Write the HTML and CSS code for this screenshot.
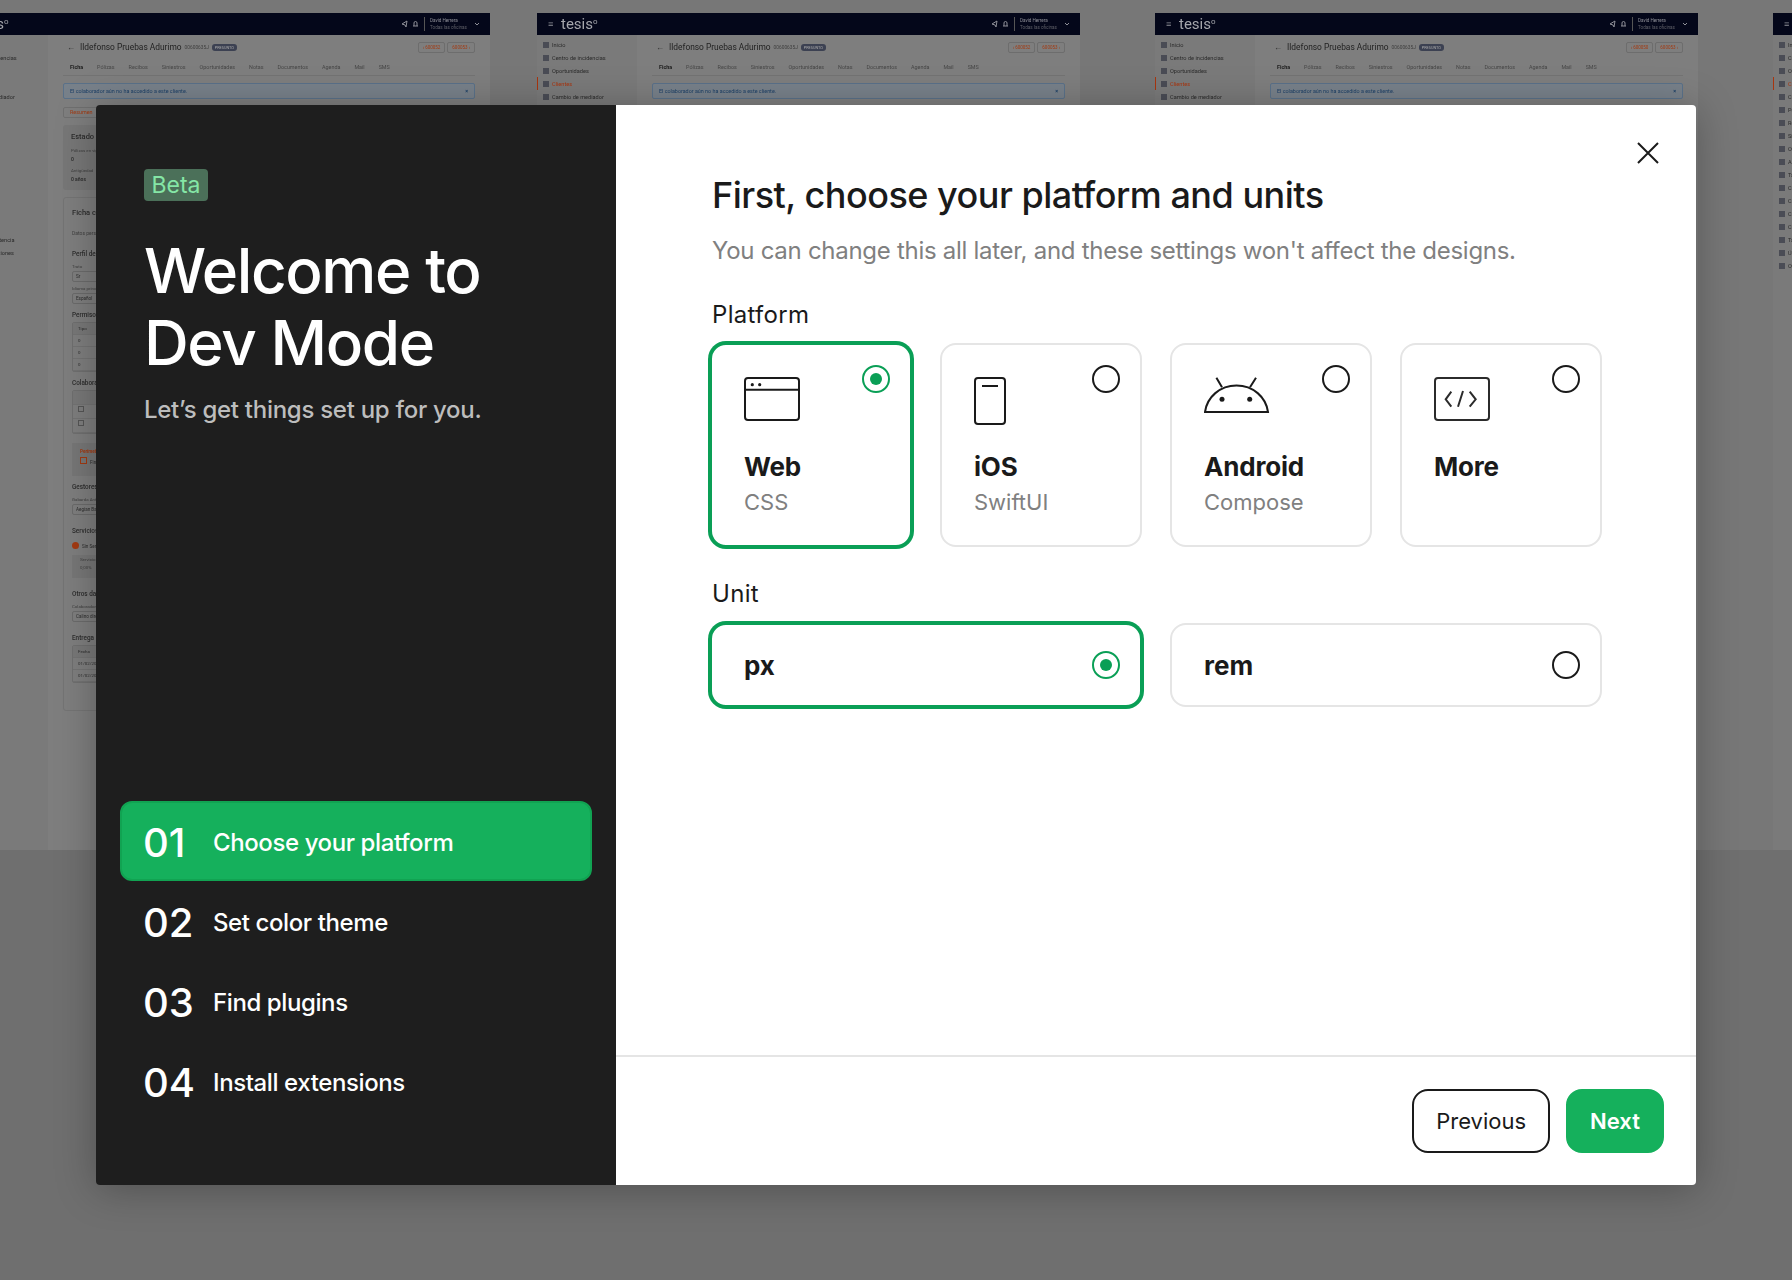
FILE: index.html
```html
<!DOCTYPE html>
<html lang="en">
<head>
	<meta charset="UTF-8">
	<meta name="viewport" content="width=device-width, initial-scale=1.0">
	<title>Welcome to Dev Mode</title>
	<link rel="stylesheet" href="styles.css">
</head>
<body>
	<div class="board">
		<!-- window 1, only the left edge shows next to the modal -->
		<div class="screen screen-1">
			<div class="topbar">
				<span class="menu-icon">≡</span><span class="logo">tesis<sup>o</sup></span>
				<svg class="bar-icons" width="18" height="8" viewBox="0 0 18 8" fill="none" stroke="#8f9098"><path d="M1 4l5-3-1 6-1-2zM12 6h5M13 6V3a1.500 1.500 0 013 0v3"/></svg>
				<div class="user"><span class="user-name">David Herrera</span><span class="user-sub">Todas las oficinas</span></div>
				<svg class="chevron" width="6" height="4" viewBox="0 0 6 4" fill="none" stroke="#8f9098"><path d="M1 1l2 2 2-2"/></svg>
			</div>
			<div class="screen-body">
				<ul class="side">
					<li><i></i>Inicio</li>
					<li><i></i>Centro de incidencias</li>
					<li><i></i>Oportunidades</li>
					<li class="side-current"><i></i>Clientes</li>
					<li><i></i>Cambio de mediador</li>
					<li><i></i>Pólizas</li>
					<li><i></i>Recibos</li>
					<li><i></i>Siniestros</li>
					<li><i></i>Otros</li>
					<li><i></i>Agenda</li>
					<li><i></i>Tareas</li>
					<li><i></i>Cartera</li>
					<li><i></i>Cuentas</li>
					<li><i></i>Cobros</li>
					<li><i></i>Correo</li>
					<li><i></i>Tarifas de asistencia</li>
					<li><i></i>Últimas operaciones</li>
					<li><i></i>Otros</li>
				</ul>
				<div class="content">
					<div class="crumb"><span class="back">←</span><span class="client">Ildefonso Pruebas Adurimo</span><span class="client-id">00600635J</span><span class="pill">PRESUNTO</span>
						<div class="pager"><span>‹ 600052</span><span>600053 ›</span></div>
					</div>
					<div class="tabs"><span class="tab-on">Ficha</span><span>Pólizas</span><span>Recibos</span><span>Siniestros</span><span>Oportunidades</span><span>Notas</span><span>Documentos</span><span>Agenda</span><span>Mail</span><span>SMS</span></div>
					<div class="notice">El colaborador aún no ha accedido a este cliente.<b>×</b></div>
					<div class="subtab">Resumen</div>
					<div class="block">
						<h4>Estado actual</h4>
						<p class="tiny">Pólizas en vigor</p><p class="val">0</p>
						<p class="tiny">Antigüedad</p><p class="val">0 años</p>
					</div>
					<div class="sheet">
						<h4>Ficha cliente</h4>
						<p class="tiny data">Datos personales</p>
						<h5 class="after-data">Perfil del cliente</h5>
						<p class="tiny">Trato</p><div class="field">Sr</div>
						<p class="tiny">Idioma principal</p><div class="field">Español</div>
						<h5>Permisos</h5>
						<div class="grid-box"><p>Tipo</p><p>0</p><p>0</p><p>0</p></div>
						<h5>Colaboradores</h5>
						<div class="grid-box grid-icons"><p>&nbsp;</p><p><i></i></p><p><i></i></p></div>
						<div class="perm"><p class="perm-title">Perímetro</p><p><i></i>Firma</p></div>
						<h5>Gestores</h5>
						<p class="tiny">Gabarda Antonio</p><div class="field">Aegian Baltic</div>
						<h5 class="wide-gap">Servicios</h5>
						<p class="radio-line"><i></i>Sin Servicio</p>
						<div class="perm perm-small"><p class="tiny">Servicio</p><p class="tiny">0,00%</p></div>
						<h5 class="wide-gap">Otros datos</h5>
						<p class="tiny">Colaborador</p><div class="field">Calino dirección</div>
						<h5 class="wide-gap">Entrega</h5>
						<div class="grid-box"><p>Fecha</p><p>01/02/2023</p><p>01/02/2023</p></div>
					</div>
				</div>
			</div>
		</div>

		<div class="screen screen-2">
			<div class="topbar">
				<span class="menu-icon">≡</span><span class="logo">tesis<sup>o</sup></span>
				<svg class="bar-icons" width="18" height="8" viewBox="0 0 18 8" fill="none" stroke="#8f9098"><path d="M1 4l5-3-1 6-1-2zM12 6h5M13 6V3a1.500 1.500 0 013 0v3"/></svg>
				<div class="user"><span class="user-name">David Herrera</span><span class="user-sub">Todas las oficinas</span></div>
				<svg class="chevron" width="6" height="4" viewBox="0 0 6 4" fill="none" stroke="#8f9098"><path d="M1 1l2 2 2-2"/></svg>
			</div>
			<div class="screen-body">
				<ul class="side">
					<li><i></i>Inicio</li>
					<li><i></i>Centro de incidencias</li>
					<li><i></i>Oportunidades</li>
					<li class="side-current"><i></i>Clientes</li>
					<li><i></i>Cambio de mediador</li>
				</ul>
				<div class="content">
					<div class="crumb"><span class="back">←</span><span class="client">Ildefonso Pruebas Adurimo</span><span class="client-id">00600635J</span><span class="pill">PRESUNTO</span>
						<div class="pager"><span>‹ 600052</span><span>600053 ›</span></div>
					</div>
					<div class="tabs"><span class="tab-on">Ficha</span><span>Pólizas</span><span>Recibos</span><span>Siniestros</span><span>Oportunidades</span><span>Notas</span><span>Documentos</span><span>Agenda</span><span>Mail</span><span>SMS</span></div>
					<div class="notice">El colaborador aún no ha accedido a este cliente.<b>×</b></div>
				</div>
			</div>
		</div>

		<div class="screen screen-3">
			<div class="topbar">
				<span class="menu-icon">≡</span><span class="logo">tesis<sup>o</sup></span>
				<svg class="bar-icons" width="18" height="8" viewBox="0 0 18 8" fill="none" stroke="#8f9098"><path d="M1 4l5-3-1 6-1-2zM12 6h5M13 6V3a1.500 1.500 0 013 0v3"/></svg>
				<div class="user"><span class="user-name">David Herrera</span><span class="user-sub">Todas las oficinas</span></div>
				<svg class="chevron" width="6" height="4" viewBox="0 0 6 4" fill="none" stroke="#8f9098"><path d="M1 1l2 2 2-2"/></svg>
			</div>
			<div class="screen-body">
				<ul class="side">
					<li><i></i>Inicio</li>
					<li><i></i>Centro de incidencias</li>
					<li><i></i>Oportunidades</li>
					<li class="side-current"><i></i>Clientes</li>
					<li><i></i>Cambio de mediador</li>
				</ul>
				<div class="content">
					<div class="crumb"><span class="back">←</span><span class="client">Ildefonso Pruebas Adurimo</span><span class="client-id">00600635J</span><span class="pill">PRESUNTO</span>
						<div class="pager"><span>‹ 600050</span><span>600053 ›</span></div>
					</div>
					<div class="tabs"><span class="tab-on">Ficha</span><span>Pólizas</span><span>Recibos</span><span>Siniestros</span><span>Oportunidades</span><span>Notas</span><span>Documentos</span><span>Agenda</span><span>Mail</span><span>SMS</span></div>
					<div class="notice">El colaborador aún no ha accedido a este cliente.<b>×</b></div>
				</div>
			</div>
		</div>

		<div class="screen screen-4">
			<div class="topbar"><span class="menu-icon">≡</span></div>
			<div class="screen-body">
				<ul class="side">
					<li><i></i>Inicio</li>
					<li><i></i>Centro</li>
					<li><i></i>Oportunidades</li>
					<li class="side-current"><i></i>Clientes</li>
					<li><i></i>Cambio</li>
					<li><i></i>Pólizas</li>
					<li><i></i>Recibos</li>
					<li><i></i>Siniestros</li>
					<li><i></i>Otros</li>
					<li><i></i>Agenda</li>
					<li><i></i>Tareas</li>
					<li><i></i>Cartera</li>
					<li><i></i>Cuentas</li>
					<li><i></i>Cobros</li>
					<li><i></i>Correo</li>
					<li><i></i>Tarifas</li>
					<li><i></i>Últimas</li>
					<li><i></i>Otros</li>
				</ul>
			</div>
		</div>
	</div>

	<div class="modal">
		<div class="intro">
			<span class="beta">Beta</span>
			<h1>Welcome to<br>Dev Mode</h1>
			<p class="intro-sub">Let’s get things set up for you.</p>
			<ol class="steps">
				<li class="step step-current"><span class="step-num">01</span>Choose your platform</li>
				<li class="step"><span class="step-num">02</span>Set color theme</li>
				<li class="step"><span class="step-num">03</span>Find plugins</li>
				<li class="step"><span class="step-num">04</span>Install extensions</li>
			</ol>
		</div>
		<div class="setup">
			<button class="close" aria-label="Close">
				<svg width="24" height="24" viewBox="0 0 24 24" fill="none" stroke="#1a1a1a" stroke-width="2"><path d="M2 2l20 20M22 2L2 22"/></svg>
			</button>
			<div class="setup-main">
				<h2>First, choose your platform and units</h2>
				<p class="setup-sub">You can change this all later, and these settings won't affect the designs.</p>

				<div class="group-label">Platform</div>
				<div class="platforms">
					<div class="card card-on">
						<span class="radio radio-on"></span>
						<div class="card-icon">
							<svg width="56" height="44" viewBox="0 0 56 44" fill="none" stroke="#1a1a1a" stroke-width="2"><rect x="1" y="1" width="54" height="42" rx="3"/><path d="M1 12.700h54"/><circle cx="8.300" cy="7.700" r="1.600" fill="#1a1a1a" stroke="none"/><circle cx="15.700" cy="7.700" r="1.600" fill="#1a1a1a" stroke="none"/></svg>
						</div>
						<div class="card-title">Web</div>
						<div class="card-sub">CSS</div>
					</div>
					<div class="card">
						<span class="radio"></span>
						<div class="card-icon">
							<svg width="32" height="48" viewBox="0 0 32 48" fill="none" stroke="#1a1a1a" stroke-width="2"><rect x="1" y="1" width="30" height="46" rx="3"/><path d="M8 9h16"/></svg>
						</div>
						<div class="card-title">iOS</div>
						<div class="card-sub">SwiftUI</div>
					</div>
					<div class="card">
						<span class="radio"></span>
						<div class="card-icon">
							<svg width="66" height="36" viewBox="0 0 66 36" fill="none" stroke="#1a1a1a" stroke-width="2"><path d="M1 35C3 20 16 8.500 32.500 8.500S62 20 64 35Z"/><path d="M12.400 .7l5.600 9.600M52 .7l-6 9.600"/><circle cx="18" cy="22.300" r="2.500" fill="#1a1a1a" stroke="none"/><circle cx="45.700" cy="22.300" r="2.500" fill="#1a1a1a" stroke="none"/></svg>
						</div>
						<div class="card-title">Android</div>
						<div class="card-sub">Compose</div>
					</div>
					<div class="card">
						<span class="radio"></span>
						<div class="card-icon">
							<svg width="56" height="44" viewBox="0 0 56 44" fill="none" stroke="#2b2b2b" stroke-width="2"><rect x="1" y="1" width="54" height="42" rx="3"/><path d="M17.300 14.700l-5.600 7.600 5.600 7.400M29 14l-5 15.700M35.700 14.700l6 7.600-6 7.400"/></svg>
						</div>
						<div class="card-title">More</div>
					</div>
				</div>

				<div class="group-label unit-label">Unit</div>
				<div class="units">
					<div class="card unit card-on">px<span class="radio radio-on"></span></div>
					<div class="card unit">rem<span class="radio"></span></div>
				</div>
			</div>
			<div class="setup-footer">
				<button class="btn">Previous</button>
				<button class="btn btn-primary">Next</button>
			</div>
		</div>
	</div>
</body>
</html>
```

FILE: styles.css
```css
* {
	box-sizing: border-box;
}

body {
	margin: 0;
	width: 1792px;
	height: 1280px;
	overflow: hidden;
	position: relative;
	background-color: #6f6f6f;
	font-family: Inter, "Liberation Sans", sans-serif;
	color: #1a1a1a;
}

h1, h2, h4, h5, p, ul, ol {
	margin: 0;
	padding: 0;
	list-style: none;
}

/* blurred pages behind the dialog */
.board {
	height: 850px;
	background-color: #777;
	position: relative;
	overflow: hidden;
	font-family: Roboto, sans-serif;
	filter: blur(0.5px);
}

.screen {
	position: absolute;
	top: 13px;
	height: 837px;
	background-color: #7e7e7e;
	color: #2c2c2c;
}
.screen-1 { left: -52px; width: 542px; }
.screen-2 { left: 537px; width: 543px; }
.screen-3 { left: 1155px; width: 543px; }
.screen-4 { left: 1773px; width: 543px; }

.topbar {
	height: 22px;
	background-color: #04071a;
	color: #8f9098;
	display: flex;
	align-items: center;
	padding: 0 11px;
}
.menu-icon {
	font-size: 9px;
	width: 13px;
}
.logo {
	font-size: 15px;
	color: #a5a6ac;
}
.logo sup {
	font-size: 8px;
	vertical-align: 5px;
	line-height: 0;
}
.bar-icons {
	margin-left: auto;
	margin-right: 5px;
}
.user {
	display: flex;
	flex-direction: column;
	font-size: 4.6px;
	line-height: 7px;
	padding: 0 7px 0 5px;
	border-left: 1px solid #555;
}
.user-sub {
	color: #5f6068;
}
.chevron {
	margin-right: -1px;
}

.screen-body {
	display: flex;
	height: 815px;
}

.side {
	width: 100px;
	flex: none;
	padding-top: 3px;
	background-color: #7a7a7a;
	font-size: 5.6px;
}
.side li {
	height: 13px;
	display: flex;
	align-items: center;
	gap: 3px;
	padding-left: 6px;
	white-space: nowrap;
	color: #2a2a2a;
	position: relative;
}
.side i {
	width: 6px;
	height: 6px;
	background-color: #4a4c55;
	flex: none;
}
.side-current {
	box-shadow: inset 1px 0 0 #a8350f;
}
.side .side-current {
	color: #a8350f;
}

.content {
	flex: 1;
	padding: 0 15px;
	min-width: 0;
}

.crumb {
	height: 24px;
	display: flex;
	align-items: center;
	font-size: 8px;
	gap: 3px;
	padding-left: 4px;
}
.back {
	width: 10px;
}
.client {
	font-size: 8.4px;
	color: #222;
}
.client-id {
	font-size: 4.8px;
	color: #3f3f3f;
}
.pill {
	font-size: 3.8px;
	background-color: #3c4152;
	color: #aaa;
	padding: 1px 3px;
	border-radius: 3px;
}
.pager {
	margin-left: auto;
	display: flex;
	gap: 2px;
}
.pager span {
	font-size: 4.5px;
	color: #a23a12;
	border: 1px solid #6d6d6d;
	border-radius: 2px;
	padding: 2px 4px;
}

.tabs {
	display: flex;
	height: 17px;
	align-items: center;
	gap: 14px;
	font-size: 5.4px;
	color: #474747;
	border-bottom: 1px solid #737373;
}
.tabs span:first-child {
	padding: 5px 7px;
	margin-right: -7px;
	color: #1c1c1c;
	font-weight: 700;
}

.notice {
	margin-top: 7px;
	height: 16px;
	display: flex;
	justify-content: space-between;
	align-items: center;
	padding: 0 6px;
	font-size: 5.4px;
	color: #1c3f66;
	background-color: #78818a;
	border: 1px solid #5a7189;
	border-radius: 2px;
}

.subtab {
	margin-top: 8px;
	width: 50px;
	height: 11px;
	padding-left: 6px;
	font-size: 5.4px;
	line-height: 9px;
	color: #a23a12;
	border: 1px solid #6f6f6f;
	border-radius: 2px;
}

.block {
	margin-top: 7px;
	height: 65px;
	padding: 5px 8px;
	background-color: #777;
	border-radius: 3px;
}
.block h4, .sheet h4 {
	font-size: 7.5px;
	font-weight: 500;
	line-height: 14px;
	white-space: nowrap;
}
.tiny {
	font-size: 4.4px;
	line-height: 8px;
	margin-top: 3px;
	color: #3f3f3f;
	white-space: nowrap;
}
.val {
	font-size: 5px;
	line-height: 8px;
	font-weight: 600;
}
.block .tiny + .val + .tiny {
	margin-top: 4px;
}

.sheet {
	margin-top: 7px;
	height: 514px;
	padding: 8px;
	border: 1px solid #747474;
	border-radius: 3px;
}
.sheet h5 {
	font-size: 6.4px;
	font-weight: 500;
	line-height: 12px;
	margin-top: 5px;
	white-space: nowrap;
}
.sheet .after-data {
	margin-top: 11px;
}
.sheet .wide-gap {
	margin-top: 10px;
}
.data {
	margin-top: 9px;
	font-size: 5px;
}
.field {
	margin-top: 0;
	height: 11px;
	padding-left: 3px;
	font-size: 4.6px;
	line-height: 9px;
	border: 1px solid #6b6b6b;
	border-radius: 2px;
	white-space: nowrap;
}
.grid-box {
	margin: 1px 0 2px;
	border: 1px solid #6f6f6f;
	border-radius: 2px;
	font-size: 4.4px;
}
.grid-box p {
	height: 12px;
	line-height: 12px;
	padding-left: 5px;
	border-bottom: 1px solid #737373;
	white-space: nowrap;
}
.grid-box p:first-child {
	background-color: #787878;
}
.grid-icons p {
	height: 14px;
}
.grid-icons i {
	display: inline-block;
	width: 6px;
	height: 6px;
	border: 1px solid #555;
}
.perm {
	margin-top: 9px;
	height: 33px;
	padding: 4px 8px;
	background-color: #777;
	font-size: 4.6px;
	white-space: nowrap;
}
.perm i {
	display: inline-block;
	width: 7px;
	height: 7px;
	margin-right: 3px;
	border: 1px solid #a23a12;
}
.perm-title {
	color: #a23a12;
	font-weight: 700;
	line-height: 10px;
}
.perm-small {
	margin-top: 3px;
	height: 23px;
	padding: 1px 8px;
}
.perm-small .tiny {
	margin-top: 0;
}
.radio-line {
	margin-top: 5px;
	font-size: 4.6px;
	line-height: 10px;
	white-space: nowrap;
}
.radio-line i {
	display: inline-block;
	width: 7px;
	height: 7px;
	margin-right: 3px;
	border-radius: 50%;
	background-color: #a23a12;
	vertical-align: -1px;
}

/* dialog */
.modal {
	position: absolute;
	left: 96px;
	top: 105px;
	width: 1600px;
	height: 1080px;
	display: flex;
	border-radius: 4px;
	overflow: hidden;
	box-shadow: 0 4px 40px rgba(0, 0, 0, 0.28);
}

.intro {
	width: 520px;
	flex: none;
	display: flex;
	flex-direction: column;
	align-items: flex-start;
	padding: 64px 48px 64px;
	background-color: #1e1e1e;
	color: #fff;
}

.beta {
	height: 32px;
	padding: 0 7.500px;
	font-size: 23px;
	line-height: 32px;
	color: #85e6a6;
	background-color: #4b7059;
	border-radius: 4px;
}

h1 {
	margin-top: 34px;
	font-size: 62px;
	font-weight: 500;
	line-height: 72px;
	letter-spacing: -1.400px;
}

.intro-sub {
	margin-top: 15px;
	font-size: 24px;
	font-weight: 500;
	line-height: 32px;
	letter-spacing: -0.280px;
	color: #bdbdbd;
}

.steps {
	margin: auto -24px 0;
	align-self: stretch;
}

.step {
	height: 80px;
	display: flex;
	align-items: center;
	padding: 2px 24px 0;
	font-size: 24px;
	font-weight: 500;
	letter-spacing: -0.4px;
	border-radius: 12px;
}
.step-current {
	background-color: #15b05c;
	border: 2px solid #11a352;
	padding: 2px 22px 0;
}
.step-num {
	width: 70px;
	margin-left: -1px;
	font-size: 40px;
	font-weight: 500;
	letter-spacing: 0;
}

.setup {
	flex: 1;
	min-width: 0;
	position: relative;
	display: flex;
	flex-direction: column;
	background-color: #fff;
}

.close {
	position: absolute;
	top: 36px;
	right: 36px;
	width: 24px;
	height: 24px;
	padding: 0;
	border: none;
	background: none;
}

.setup-main {
	flex: 1;
	padding: 68px 94px 0;
}

h2 {
	font-size: 36px;
	font-weight: 500;
	line-height: 44px;
	letter-spacing: -0.5px;
	margin-left: 2px;
}

.setup-sub {
	margin-top: 18px;
	font-size: 24px;
	line-height: 32px;
	letter-spacing: -0.28px;
	color: #808080;
	margin-left: 2px;
}

.group-label {
	margin-top: 32px;
	font-size: 24px;
	line-height: 32px;
	letter-spacing: 0.3px;
	margin-left: 2px;
}
.unit-label {
	margin-top: 31px;
}

.platforms {
	margin-top: 12px;
	display: grid;
	grid-template-columns: repeat(4, 1fr);
	gap: 28px;
}

.units {
	margin-top: 13px;
	display: grid;
	grid-template-columns: repeat(2, 1fr);
	gap: 28px;
}

.card {
	position: relative;
	height: 204px;
	padding: 32px;
	border: 2px solid #e5e5e5;
	border-radius: 16px;
	background-color: #fff;
}
.card-on {
	border-color: #0a9f56;
	box-shadow: 0 0 0 2px #0a9f56;
}
.card-icon {
	height: 48px;
}
.card-icon svg {
	display: block;
}
.card-title {
	margin-top: 25px;
	font-size: 26px;
	font-weight: 700;
	line-height: 34px;
	letter-spacing: -0.2px;
}
.card-sub {
	margin-top: 1px;
	font-size: 22px;
	line-height: 34px;
	color: #808080;
}

.unit {
	height: 84px;
	padding: 0 32px;
	display: flex;
	align-items: center;
	font-size: 26px;
	font-weight: 700;
}
.unit .radio {
	top: 26px;
}

.radio {
	position: absolute;
	top: 20px;
	right: 20px;
	width: 28px;
	height: 28px;
	border: 2px solid #1a1a1a;
	border-radius: 50%;
}
.radio-on {
	border-color: #0a9f56;
}
.radio-on::after {
	content: "";
	display: block;
	width: 12px;
	height: 12px;
	margin: 6px;
	border-radius: 50%;
	background-color: #0a9f56;
}

.setup-footer {
	height: 130px;
	display: flex;
	justify-content: flex-end;
	gap: 16px;
	padding: 32px;
	border-top: 2px solid #e5e5e5;
}

.btn {
	height: 64px;
	padding: 0 22px;
	font-family: Inter, "Liberation Sans", sans-serif;
	font-size: 22px;
	color: #1a1a1a;
	background-color: #fff;
	border: 2px solid #1a1a1a;
	border-radius: 16px;
}
.btn-primary {
	font-weight: 600;
	color: #fff;
	background-color: #15b05c;
	border-color: #15b05c;
}
```
